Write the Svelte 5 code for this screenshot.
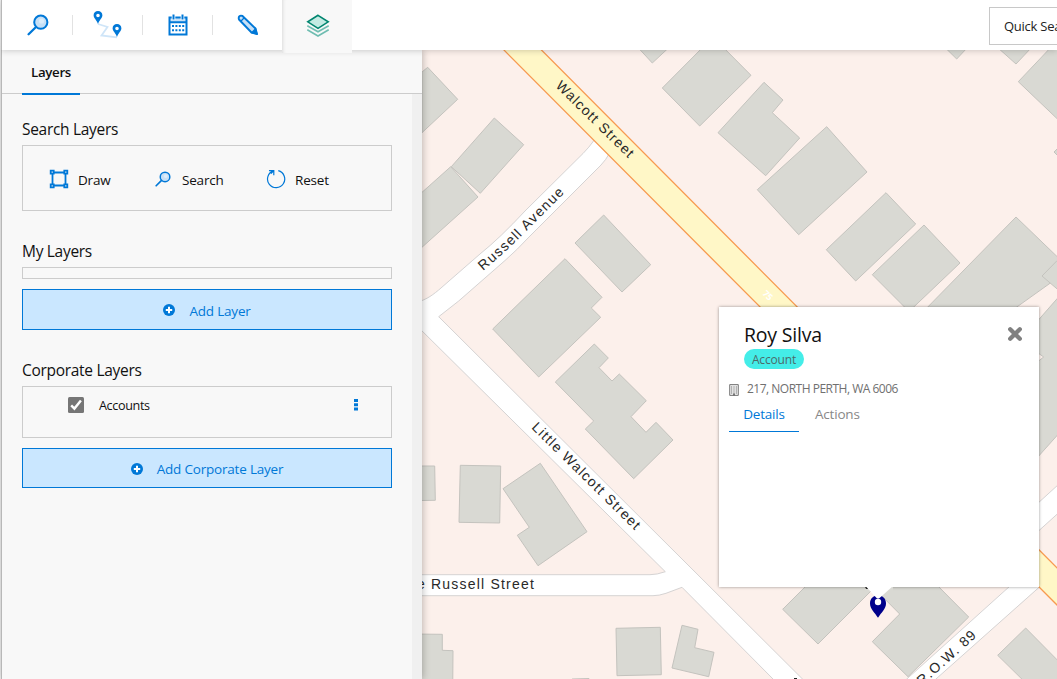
<script>
  const buildings = [
    '422,72 427.7,67.3 457.7,99.3 422,132.7',
    '494.3,118 523.7,144.7 480.3,193.3 451.3,166.7',
    '400,212 450.7,166.7 478,197 400,267',
    '603.7,215 650.7,264.7 622,292 575,243',
    '565,258.7 602,297.3 591.3,308 600.7,317.3 538.7,377 492.7,329',
    '594.3,344 608.3,358 599,367.7 612,381 619.3,374 646.3,400.7 631,416.7 646,432.3 656,422.3 673,440 633.7,478.7 585.3,429 593.7,421 555.3,382',
    '410,466 434.7,466 435.3,500.3 410,500.7',
    '460.3,465.3 500.7,466 499.7,523 459,522.3',
    '540.3,463.3 587,531.7 538,565.7 517.3,535.3 529.3,527.3 503,488.7',
    '410,634 442.3,634.3 442.3,650.3 453,650.7 452.7,690 410,690',
    '616,628.3 660.3,627.3 661.3,674.7 617,675.7',
    '682,625.3 698,629.3 694.7,647.7 714,652.3 708.7,676.7 672,668',
    '572,679 589,678.5 589,690 572,690',
    '638,47.5 652.3,63 669,47.5',
    '713,37 751,75.3 699.7,126 662.3,88',
    '764,82.3 783,100 772.3,112.7 799.7,138 765.7,175.7 718,132.7',
    '826.7,126.7 867,172 798.7,234.7 757.3,189.7',
    '886,192.7 915.7,224 855.7,281 826.3,249.7',
    '924,225 960,263 909,311.5 872.3,274.7',
    '1016,217 1070,269 1000,319 916,319',
    '1057,260.7 1070,250 1070,300 1042,276',
    '1070,284 1020,341 1020,477 1070,421',
    '1048.3,50 1058,40 1070,131 1018.3,81.7',
    '945,47.5 956.7,59 967.5,47.5',
    '997,47 1016,64 1032,47',
    '1060,146 1054,152 1060,158',
    '812,580 782.7,609.3 818,644 880,582',
    '868,582 899.7,614 872.3,641.7 908,676.7 968.7,617 932,580',
    '1025.7,628 997.7,655.3 1035,692 1080,692 1080,683'
  ];
  const dots = [0, 1, 2, 3];
</script>

{#snippet lens(size)}
  <svg width={size} height={size} viewBox="0 0 22 22" fill="none">
    <circle cx="13.8" cy="8.2" r="6.6" fill="#c7e0f6" stroke="#0078d7" stroke-width="2" />
    <circle cx="14.6" cy="7" r="2.6" fill="#dcedfb" />
    <path d="M9 13 1.6 20.3" stroke="#0078d7" stroke-width="2.3" stroke-linecap="round" />
  </svg>
{/snippet}

{#snippet plus()}
  <svg class="plus" width="12" height="12" viewBox="0 0 12 12">
    <circle cx="6" cy="6" r="6" fill="#0078d7" />
    <path d="M6 2.8v6.4M2.8 6h6.4" stroke="#fff" stroke-width="2" />
  </svg>
{/snippet}

<div class="app">
  <header>
    <nav>
      <button class="tool" aria-label="Search">{@render lens(22)}</button>
      <button class="tool" aria-label="Routes">
        <svg width="30" height="30" viewBox="0 0 30 30" fill="none">
          <path d="M5 14 14.500 17 8.500 25.500 24 27.300" stroke="#cfe5f8" stroke-width="1.800" />
          <path fill="#0078d7" fill-rule="evenodd" d="M5 1C2.400 1 .6 2.900.6 5.300c0 2.800 3 4.600 4.400 8.700 1.400-4.100 4.400-5.900 4.400-8.700C9.400 2.900 7.600 1 5 1Zm0 2.700a1.800 1.800 0 1 1 0 3.600 1.800 1.800 0 0 1 0-3.600Z" />
          <path fill="#0078d7" fill-rule="evenodd" d="M24 14c-2.600 0-4.400 1.900-4.400 4.300 0 2.800 3 4.600 4.400 8.700 1.400-4.100 4.400-5.900 4.400-8.700 0-2.400-1.800-4.300-4.400-4.300Zm0 2.700a1.800 1.800 0 1 1 0 3.600 1.800 1.800 0 0 1 0-3.600Z" />
        </svg>
      </button>
      <button class="tool" aria-label="Calendar">
        <svg width="20" height="22" viewBox="0 0 20 22">
          <path d="M1.500 4h17v4h-17z" fill="#c7e0f6" />
          <path d="M1.500 3.500h17v17h-17zM1 8.300h18" fill="none" stroke="#0078d7" stroke-width="2" />
          <path d="M5.500 1v5M14.500 1v5" stroke="#fff" stroke-width="3.600" />
          <path d="M5.500 .5v5M14.500 .5v5" stroke="#0078d7" stroke-width="2" />
          {#each dots as d}
            <path d="M{4 + d * 3.4} 11h2v2h-2zM{4 + d * 3.4} 15.300h2v2h-2z" fill="#0078d7" />
          {/each}
        </svg>
      </button>
      <button class="tool" aria-label="Edit">
        <svg width="22" height="22" viewBox="0 0 22 22">
          <path d="M2 5.500C1 2.500 3 1 5.500 2L18.500 14.500 20 20l-5.500-1.500Z" fill="#c7e0f6" stroke="#0078d7" stroke-width="1.900" stroke-linejoin="round" />
          <path d="M3.800 7.200 7 4M18.600 14.800l-3.800 3.800 5.200 1.400Z" stroke="#0078d7" stroke-width="1.300" fill="#0078d7" />
        </svg>
      </button>
      <button class="tool active" aria-label="Layers">
        <svg width="24" height="24" viewBox="0 0 24 24" fill="none" stroke-width="1.600">
          <path d="M1.300 11.800 12 17.800l10.700-6M1.300 15.800 12 22l10.700-6.200" stroke="#6fbdb1" />
          <path d="M12 1.300 22.200 7.800 12 14.300 1.800 7.800Z" fill="#c4ebe3" stroke="#00856f" />
        </svg>
      </button>
    </nav>
    <div class="quick">Quick Search</div>
  </header>

  <main>
    <aside>
      <div class="tabs"><span class="tab">Layers</span></div>
      <div class="scroll">
        <h2>Search Layers</h2>
        <div class="box actions">
          <span class="act draw">
            <svg width="20" height="20" viewBox="0 0 20 20" fill="#e4f1fc" stroke="#0078d7" stroke-width="1.800">
              <path d="M3.500 3.500h13v13h-13z" fill="none" />
              <path d="M1.700 1.700h3v3h-3zM15.300 1.700h3v3h-3zM1.700 15.300h3v3h-3zM15.300 15.300h3v3h-3z" />
            </svg>
            Draw
          </span>
          <span class="act search">{@render lens(16)}Search</span>
          <span class="act reset">
            <svg width="20" height="20" viewBox="0 0 20 20" fill="none" stroke="#0078d7" stroke-width="1.200">
              <path d="M12.300 1.700A8.600 8.600 0 1 1 7.300 1.900M3 1.700h4.800v4.600M7.800 1.700 5 4.600" />
            </svg>
            Reset
          </span>
        </div>

        <h2 class="mine">My Layers</h2>
        <div class="box empty"></div>
        <button class="add">{@render plus()}Add Layer</button>

        <h2 class="corp">Corporate Layers</h2>
        <div class="box layer">
          <svg width="16" height="16" viewBox="0 0 16 16">
            <rect width="16" height="16" rx="1.500" fill="#767676" />
            <path d="m3.200 8.400 3.200 3.200L12.900 3.500" fill="none" stroke="#fff" stroke-width="2.400" />
          </svg>
          <span>Accounts</span>
          <svg class="more" width="4" height="12" viewBox="0 0 4 12">
            <path d="M0 0h4v3H0zM0 4.300h4v3H0zM0 8.600h4v3H0z" fill="#0078d7" />
          </svg>
        </div>
        <button class="add low">{@render plus()}Add Corporate Layer</button>
      </div>
    </aside>

    <section class="map">
      <svg class="tiles" width="635" height="629" viewBox="422 50 635 629">
        <g fill="#d9d9d3" stroke="#c4c3be" stroke-width="1">
          {#each buildings as points}
            <polygon {points} />
          {/each}
          <polygon points="1036,351.500 1043.700,357 1036,363" fill="#fcf0eb" />
        </g>

        <g fill="#fff" stroke="#d5d3d3" stroke-width="1">
          <path d="M410 304.500C426 300 430 297 438.700 290L480 254Q500 238 525 211L583 153.500Q589 147.500 594.300 140L608.700 154.500Q606.500 159 601 165L528 238Q518 249 505 260.500L458.700 301 438.700 316.700 806 682.500 777 683 682 587.300 666 593.300Q659 595.700 653 595.700H410V574.700H650Q657 574.700 665.300 571.700L415 324Z" />
          <path d="M902 683.500 1008.300 587.300 1030 568 1039 587 932 683Z" stroke="none" />
          <path d="M902 683.300 1010 586M931.500 683 1040 586.500" />
          <path d="M1030 510.400 1070 474V502.500L1030 538.700Z" />
        </g>

        <path d="M494 40 1070 618V581L531.500 40Z" fill="#fff7c7" stroke="#f79a50" stroke-width="1.300" />

        <g class="names">
          <text transform="translate(555 86.500) rotate(44.500)" textLength="104">Walcott Street</text>
          <path id="russell" d="M483 271Q503 254 520 237.500L572 185.500" fill="none" />
          <text textLength="114"><textPath href="#russell" textLength="114">Russell Avenue</textPath></text>
          <text transform="translate(531 428) rotate(44.600)" textLength="147">Little Walcott Street</text>
          <text x="431" y="589" textLength="104">Russell Street</text>
          <text x="417" y="589">e</text>
          <text transform="translate(922 686) rotate(-42)" textLength="75">R.O.W. 89</text>
        </g>
        <text class="route" transform="translate(762 294) rotate(45)">75</text>
        <path d="M865 587h3v2h-2zM794 678h3v1h-3z" fill="#222" />

        <path fill="#00008b" d="M878 595.500c-4.800 0-8 3-8 8 0 5.500 4.800 9 8 14.300 3.200-5.300 8-8.800 8-14.300 0-5-3.200-8-8-8Z" />
        <circle cx="878" cy="602" r="3.200" fill="#fff" />
        <path d="M865.500 586h27.500L879 598.500h-2Z" fill="#fff" />
      </svg>

      <article class="popup">
        <div class="title">
          <h1>Roy Silva</h1>
          <svg width="16" height="16" viewBox="0 0 16 16">
            <path d="M3.200 3.200 12.800 12.800M12.800 3.200 3.200 12.800" stroke="#808080" stroke-width="4.300" stroke-linecap="round" />
          </svg>
        </div>
        <span class="badge">Account</span>
        <div class="address">
          <svg width="10" height="12" viewBox="0 0 10 12">
            <path d="M.7.600h8.600v10.800H.7z" fill="#eee" stroke="#777" />
            <path d="M2 3h6M2 5h6M2 7h6M2 9h6" stroke="#777" stroke-dasharray="1.200 1.200" />
            <path d="M4 9.500h2V12H4z" fill="#777" />
          </svg>
          <span>217, NORTH PERTH, WA 6006</span>
        </div>
        <div class="sections"><span class="on">Details</span><span class="off">Actions</span></div>
      </article>
    </section>
  </main>
</div>

<style>
  :global(body) { margin: 0; background: #fff; overflow: hidden; }
  .app {
    box-sizing: border-box;
    width: 1057px;
    height: 679px;
    padding-left: 1px;
    background: #eee;
    border: 0;
    overflow: hidden;
    display: flex;
    flex-direction: column;
    font-family: "Open Sans", "Noto Sans", sans-serif;
    font-size: 13.500px;
    letter-spacing: -0.200px;
    color: #111;
  }
  button { font: inherit; letter-spacing: inherit; padding: 0; border: 0; background: none; }
  svg { display: block; flex: none; }
  header {
    flex: none;
    height: 50px;
    display: flex;
    justify-content: space-between;
    background: #fff;
    border-left: 1px solid #b8b8b8;
    box-shadow: 0 1px 6px rgba(0, 0, 0, .18);
    position: relative;
    z-index: 3;
  }
  nav { display: flex; }
  .tool { box-sizing: border-box; position: relative; display: flex; align-items: center; justify-content: center; width: 70px; height: 50px; padding-left: 2px; }
  .tool:nth-child(4) { padding-left: 1px; }
  .tool + .tool:not(.active)::before { content: ""; position: absolute; left: 0; top: 15px; width: 1px; height: 20px; background: #e2e2e2; }
  .tool.active { height: 53px; background: #f8f8f8; box-shadow: inset 4px 0 4px -4px #ccc; }
  .tool.active svg { margin-top: -2px; }
  .quick {
    box-sizing: border-box;
    flex: none;
    width: 150px;
    height: 38px;
    margin: 7px -82px 0 0;
    padding-left: 14px;
    border: 1px solid #c8c8c8;
    line-height: 37px;
    font-size: 13px;
    letter-spacing: -0.250px;
    color: #222;
    white-space: nowrap;
  }
  main { flex: 1; min-height: 0; display: flex; }
  aside {
    box-sizing: border-box;
    flex: none;
    width: 421px;
    display: flex;
    flex-direction: column;
    border-left: 1px solid #b8b8b8;
    background: #f8f8f8;
    box-shadow: 1px 0 7px rgba(0, 0, 0, .25);
    position: relative;
    z-index: 2;
  }
  .tabs { box-sizing: border-box; height: 44px; flex: none; padding-left: 20px; border-bottom: 1px solid #ccc; }
  .tab {
    box-sizing: border-box;
    display: block;
    width: 58px;
    height: 45px;
    border-bottom: 2px solid #0078d7;
    text-align: center;
    line-height: 44px;
    font-size: 13.300px;
    font-weight: 600;
    letter-spacing: -0.350px;
  }
  .scroll { flex: 1; box-sizing: border-box; padding: 25px 20px 0; border-right: 10px solid #f0f0f0; display: flex; flex-direction: column; }
  h2 { margin: 0; height: 26px; line-height: 20px; font-size: 15.500px; font-weight: 400; letter-spacing: -0.300px; }
  .mine { margin-top: 30px; }
  .corp { margin-top: 30px; }
  .box { box-sizing: border-box; border: 1px solid #ccc; }
  .actions { height: 66px; display: flex; align-items: center; padding: 4px 0 0 26px; }
  .act { display: flex; align-items: center; }
  .act svg { margin-top: -3px; }
  .draw { gap: 9px; width: 106px; }
  .search { gap: 11px; width: 111px; }
  .reset { gap: 9px; }
  .empty { height: 12px; }
  .add {
    box-sizing: border-box;
    display: flex;
    align-items: center;
    justify-content: center;
    gap: 14px;
    height: 41px;
    margin-top: 10px;
    padding-top: 2px;
    border: 1px solid #0078d7;
    background: #cae7ff;
    color: #0078d7;
  }
  .low { height: 40px; }
  .plus { margin-top: -1px; }
  .layer { height: 52px; display: flex; align-items: flex-start; padding: 10px 33px 0 45px; font-size: 12.600px; letter-spacing: -0.350px; }
  .layer span { margin-left: 15px; line-height: 17px; }
  .more { margin-left: auto; margin-top: 2px; }
  .map { position: relative; flex: 1; background: #fcf0eb; overflow: hidden; }
  .names text { font-family: "Liberation Sans", Arial, sans-serif; font-size: 14px; letter-spacing: 1.200px; fill: #292929; }
  .route { font-size: 9px; font-weight: 700; fill: #fff; }
  .popup {
    box-sizing: border-box;
    position: absolute;
    left: 297px;
    top: 257px;
    width: 320px;
    height: 280px;
    padding: 14px 10px 0;
    background: #fff;
    box-shadow: 0 0 3px rgba(0, 0, 0, .4);
    clip-path: polygon(-4px -4px, 324px -4px, 324px 284px, 174px 284px, 174px 280px, 146px 280px, 146px 284px, -4px 284px);
  }
  .title { display: flex; justify-content: space-between; padding: 0 6px 0 15px; height: 28px; }
  .title svg { margin-top: 5px; }
  h1 { margin: 0; line-height: 28px; font-size: 19.500px; font-weight: 400; letter-spacing: -0.200px; }
  .badge {
    display: block;
    width: 60px;
    height: 20px;
    margin-left: 15px;
    border-radius: 10px;
    background: #44ede8;
    text-align: center;
    line-height: 21px;
    font-size: 12px;
    letter-spacing: -0.150px;
    color: #4c6b6a;
  }
  .address { display: flex; align-items: center; gap: 8px; height: 20px; margin-top: 9px; font-size: 12px; letter-spacing: -0.500px; color: #707070; }
  .address svg { margin-top: 3px; }
  .sections { display: flex; line-height: 33px; font-size: 13.500px; color: #888; }
  .on { box-sizing: border-box; width: 70px; height: 34px; text-align: center; color: #0078d7; border-bottom: 1px solid #0078d7; }
  .off { margin-left: 16px; }
</style>
